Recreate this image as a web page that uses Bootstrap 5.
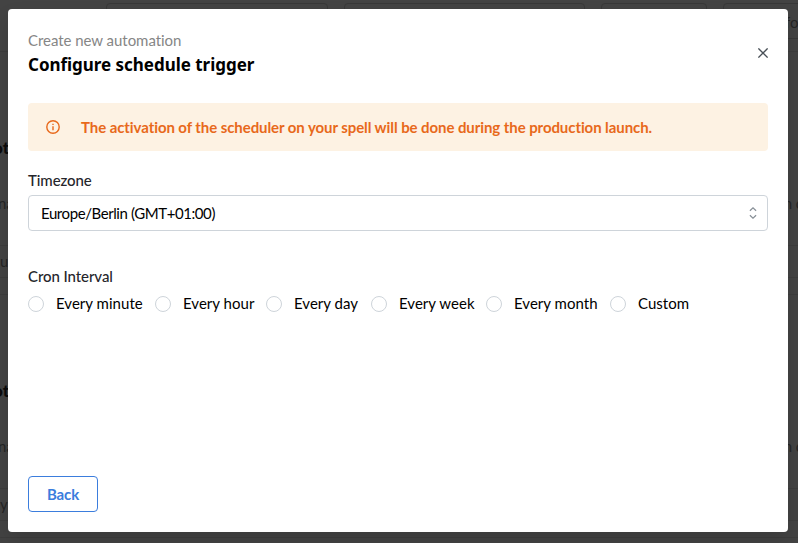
<!DOCTYPE html>
<html lang="en">
<head>
<meta charset="utf-8">
<meta name="viewport" content="width=device-width, initial-scale=1">
<title>Configure schedule trigger</title>
<link href="https://cdn.jsdelivr.net/npm/bootstrap@5.3.0/dist/css/bootstrap.min.css" rel="stylesheet">
<style>
html,body{height:100%}
body{font-family:Lato,"Liberation Sans",sans-serif;font-size:15px;line-height:20px;color:#000;background:#434343}
.page-behind{height:543px;color:#252525;line-height:20px}
.filters{height:51px;padding:3px 0 0 106px;gap:16px}
.filter-box{height:36px;border:1px solid #383838;border-radius:4px;flex:none}
.f1{width:222px}.f2{width:241px}.f3{width:106px}.f4{width:120px;padding:8px 0 0 61px}
.rule{border-top:1px solid #3d3d3d}
.head-gap{height:87px}
.peek-title{height:55px;font-weight:900;font-size:17px;color:#0b0b0b}
.peek-row{height:52px}
.peek-foot{height:32px;padding-top:5px}
.peek-end{height:17px}
.between{height:87px}
.tail-l{margin-left:-2px}
.tail-r{margin-right:-5px}
.nudge{margin-left:-7px}
.sheet{width:780px;height:523px;margin:9px 0 0 8px;padding:20px;background:#fff;border-radius:4px;box-shadow:0 10px 20px rgba(0,0,0,.12)}
.eyebrow{color:#868686;line-height:22px;letter-spacing:-.04px}
.sheet-title{font:700 17px/28px "Noto Sans",sans-serif;letter-spacing:-.03px}
.close-x{width:10px;height:10px;margin:19px 0 0}
.notice{height:48px;margin-top:24px;padding:0 18px;background:#fdf2e3;color:#e8691b;border-radius:4px;font-weight:700}
.notice svg{margin-right:21px}
.notice-text{letter-spacing:-.08px}
.field-label{color:#25262b;font-weight:500;letter-spacing:-.08px;line-height:20px}
.zone-block{padding-top:19px}
.cron-block{padding-top:35px}
.picker{height:36px;margin-top:5px;padding:0 10px 1px 12px;border:1px solid #ced4da;border-radius:4px}
.zone{letter-spacing:-.42px}
.choice input{appearance:none;width:16px;height:16px;margin:0 12px 0 0;border:1px solid #ced4da;border-radius:50%;background:#fff}
.choices{margin-top:8px}
.choice{letter-spacing:.03px;white-space:nowrap}
.choice span{margin-top:-1px}
.w1{width:127px}.w2{width:111px}.w3{width:105px}.w4{width:115px}.w5{width:124px}
.back-btn{--bs-btn-color:#3b7ddd;--bs-btn-border-color:#3b7ddd;width:70px;height:36px;padding:0;border-radius:4px;font-size:15px;font-weight:700;letter-spacing:-.1px}
</style>
<script src="https://cdn.jsdelivr.net/npm/bootstrap@5.3.0/dist/js/bootstrap.bundle.min.js"></script>
</head>
<body class="overflow-hidden">
<div class="page-behind position-absolute top-0 start-0 w-100 overflow-hidden" aria-hidden="true">
  <div class="filters d-flex">
    <div class="filter-box f1"></div><div class="filter-box f2"></div><div class="filter-box f3"></div><div class="filter-box f4">fo</div>
  </div>
  <div class="rule head-gap"></div>
  <div class="peek-title"><span class="nudge">ot</span></div>
  <div class="peek-row d-flex justify-content-between"><span class="tail-l">na</span><span class="tail-r">n c</span></div>
  <div class="rule peek-foot">u</div>
  <div class="rule peek-end"></div>
  <div class="rule between"></div>
  <div class="peek-title"><span class="nudge">ot</span></div>
  <div class="peek-row d-flex justify-content-between"><span class="tail-l">na</span><span class="tail-r">n c</span></div>
  <div class="rule peek-foot">y</div>
  <div class="rule peek-end"></div>
  <div class="rule"></div>
</div>
<main class="sheet position-relative float-start d-flex flex-column" role="dialog" aria-label="Configure schedule trigger">
  <header class="d-flex justify-content-between">
    <div>
      <div class="eyebrow"><span>Create new automation</span></div>
      <h1 class="sheet-title mb-0"><span>Configure schedule trigger</span></h1>
    </div>
    <svg class="close-x" viewBox="0 0 10 10" fill="none" stroke="#495057" stroke-width="1.3"><path d="M.4.4l9.2 9.2M9.6.4L.4 9.6"/></svg>
  </header>
  <div class="notice d-flex align-items-center">
    <svg width="14" height="14" viewBox="0 0 14 14" fill="none" stroke="#e8691b" stroke-width="1.4"><circle cx="7" cy="7" r="6.2"/><path d="M7 6.2v4M7 3.7v1.4"/></svg>
    <span class="notice-text">The activation of the scheduler on your spell will be done during the production launch.</span>
  </div>
  <section class="zone-block">
    <div class="field-label"><span>Timezone</span></div>
    <div class="picker d-flex align-items-center justify-content-between">
      <span class="zone">Europe/Berlin (GMT+01:00)</span>
      <svg width="8" height="12" viewBox="0 0 8 12" fill="none" stroke="#868e96" stroke-width="1.2"><path d="M.9 3.8L4 .9l3.1 2.9M.9 8.2L4 11.1l3.1-2.9"/></svg>
    </div>
  </section>
  <section class="cron-block">
    <div class="field-label"><span>Cron Interval</span></div>
    <div class="choices d-flex">
      <label class="choice w1 d-flex align-items-center"><input type="radio" name="cron"><span>Every minute</span></label>
      <label class="choice w2 d-flex align-items-center"><input type="radio" name="cron"><span>Every hour</span></label>
      <label class="choice w3 d-flex align-items-center"><input type="radio" name="cron"><span>Every day</span></label>
      <label class="choice w4 d-flex align-items-center"><input type="radio" name="cron"><span>Every week</span></label>
      <label class="choice w5 d-flex align-items-center"><input type="radio" name="cron"><span>Every month</span></label>
      <label class="choice d-flex align-items-center"><input type="radio" name="cron"><span>Custom</span></label>
    </div>
  </section>
  <footer class="mt-auto"><button class="btn back-btn" type="button">Back</button></footer>
</main>
</body>
</html>
